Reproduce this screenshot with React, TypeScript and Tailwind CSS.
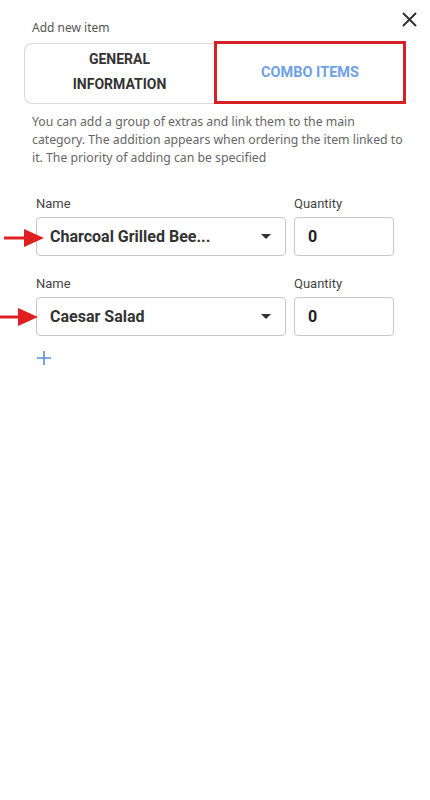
import React from "react";

function Arrow({ className }: { className: string }) {
  return (
    <svg className={className} width="40" height="20" viewBox="0 0 40 20">
      <rect x="0" y="8.5" width="24" height="3" fill="#e02020" />
      <polygon points="20,1 40,10 20,19" fill="#e02020" />
    </svg>
  );
}

function Caret() {
  return (
    <svg width="10" height="6" viewBox="0 0 10 6">
      <polygon points="0,0 10,0 5,5" fill="#333" />
    </svg>
  );
}

function Row({ name }: { name: string }) {
  return (
    <div className="flex gap-2">
      <div className="flex flex-col w-[250px]">
        <div className="text-[13px] leading-[18px] text-[#444] mb-[4px]" style={{ fontFamily: "Roboto, sans-serif" }}>Name</div>
        <div className="h-[39px] border border-[#c8c8c8] rounded-[4px] flex items-center pl-[13px] pr-[14px]">
          <span className="flex-1 font-bold text-[16px] text-[#333]" style={{ fontFamily: "Roboto, sans-serif" }}>{name}</span>
          <Caret />
        </div>
      </div>
      <div className="flex flex-col w-[100px]">
        <div className="text-[13px] leading-[18px] text-[#444] mb-[4px]" style={{ fontFamily: "Roboto, sans-serif" }}>Quantity</div>
        <div className="h-[39px] border border-[#c8c8c8] rounded-[4px] flex items-center pl-[13px]">
          <span className="font-bold text-[16px] text-[#222]" style={{ fontFamily: "Roboto, sans-serif" }}>0</span>
        </div>
      </div>
    </div>
  );
}

export default function App() {
  return (
    <div className="w-[430px] h-[800px] bg-white flex relative overflow-hidden">
      <div className="flex-1 relative">
        <button className="absolute left-[402px] top-[12px] w-[15px] h-[15px]">
          <svg width="15" height="15" viewBox="0 0 15 15">
            <path d="M1 1 L14 14 M14 1 L1 14" stroke="#333" strokeWidth="2" />
          </svg>
        </button>
        <div className="pt-[19px] pl-[24px] pr-[24px]">
          <div className="pl-[8px] text-[12px] leading-[18px] text-[#555]" style={{ fontFamily: "'Noto Sans', sans-serif" }}>Add new item</div>
          <div className="mt-[5px] flex w-[382px] h-[62px]" style={{ fontFamily: "Roboto, sans-serif" }}>
            <div className="w-[190px] h-[61px] mt-[1px] border border-[#d9d9d9] border-r-0 rounded-l-[8px] flex items-center justify-center text-center font-bold text-[14px] leading-[25px] text-[#333] pb-[3px]">
              GENERAL<br />INFORMATION
            </div>
            <div className="flex-1 h-[63px] -mt-[1px] border-[3px] border-[#d62027] flex items-center justify-center font-bold text-[14.5px] text-[#6f9fe6]">
              COMBO ITEMS
            </div>
          </div>
          <div className="pl-[8px] mt-[9px] text-[12.25px] leading-[18px] text-[#666] w-[381px]" style={{ fontFamily: "'Noto Sans', sans-serif" }}>
            You can add a group of extras and link them to the main category. The addition appears when ordering the item linked to it. The priority of adding can be specified
          </div>
          <div className="pl-[12px] mt-[28px] flex flex-col gap-[19px]">
            <Row name="Charcoal Grilled Bee..." />
            <Row name="Caesar Salad" />
          </div>
          <div className="pl-[13px] mt-[15px]">
            <svg width="14" height="14" viewBox="0 0 14 14">
              <path d="M7 0 V14 M0 7 H14" stroke="#5b8fd6" strokeWidth="1.6" />
            </svg>
          </div>
        </div>
        <Arrow className="absolute left-[4px] top-[228px]" />
        <Arrow className="absolute left-[-2px] top-[307px]" />
      </div>
      <div className="w-[4px] h-[762px] bg-[#c1c1c1]" />
    </div>
  );
}
